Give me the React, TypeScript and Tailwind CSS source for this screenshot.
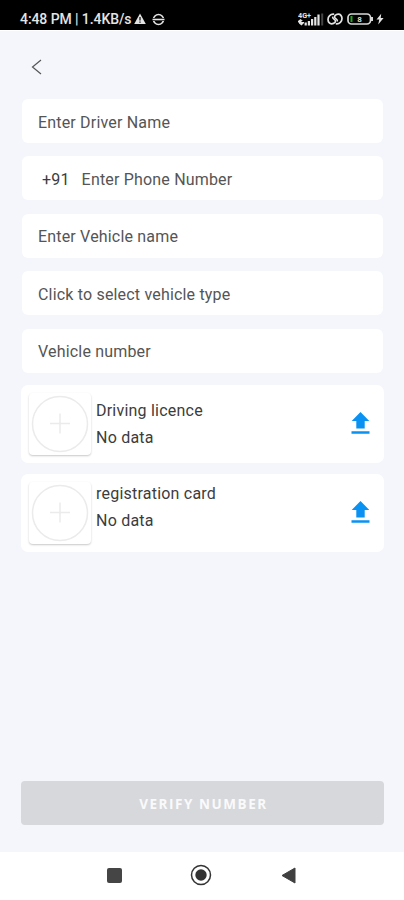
type UploadRowProps = {
  title: string;
  className: string;
};

const fields = [
  { label: "Enter Driver Name", prefix: "" },
  { label: "Enter Phone Number", prefix: "+91" },
  { label: "Enter Vehicle name", prefix: "" },
  { label: "Click to select vehicle type", prefix: "" },
  { label: "Vehicle number", prefix: "" },
];

function StatusBar() {
  return (
    <header className="flex h-[30px] shrink-0 items-center bg-black pl-5 pr-5 pt-[8px] text-[#e4e4e4]">
      <span className="whitespace-nowrap text-[14px] font-medium leading-5 tracking-[-0.08px]">
        4:48 PM | 1.4KB/s
      </span>
      <svg className="ml-[3px] h-3 w-3" viewBox="0 0 12 12">
        <path d="M6 .5 11.8 11H.2Z" fill="currentColor" />
        <path d="M6 4v3.5M6 8.5v1.3" stroke="#000" strokeWidth="1.2" />
      </svg>
      <svg className="ml-[6px] h-[13px] w-[13px]" viewBox="0 0 13 13" fill="none" stroke="currentColor">
        <circle cx="6.5" cy="6.5" r="5" strokeWidth="1.6" />
        <path d="M0 6.5h13" stroke="#000" strokeWidth="3" />
        <path d="M.5 6.5h12" strokeWidth="1.6" />
      </svg>

      <div className="ml-auto flex items-center">
        <svg className="h-[14px] w-[26px]" viewBox="0 0 26 14" fill="currentColor">
          <text x="0" y="5.5" fontSize="7" fontWeight="700" textLength="13" lengthAdjust="spacingAndGlyphs">
            4G+
          </text>
          <path d="m0 9 2.5-2L5 9H3.5v1H6v1l-2.5 2.5L1 11.5v-1H0Z" />
          <path d="M6.6 10.5h2.2v3H6.6zM9.8 9h2.2v4.5H9.8zM13 7h2.2v6.5H13zM16.2 5h2.2v8.5h-2.2zM19.4 2.5h2.2v11h-2.2z" />
          <path d="M23.2 1.5h2v12h-2z" fill="#444" />
        </svg>
        <svg className="ml-[3px] h-3 w-4" viewBox="0 0 16 12" fill="none" stroke="currentColor" strokeWidth="1.7" strokeLinecap="round">
          <path d="M6.5 1.2C3.5 1 1 3.400 1 6.400c0 2.600 1.700 4.500 3.800 4.400 2.500-.1 4.200-1.700 3.500-3.300-.6-1.400-2.600-1.700-2.600-3.200" />
          <path d="M9.500 10.800c3 .2 5.500-2.200 5.500-5.200 0-2.600-1.700-4.500-3.800-4.400-2.500.1-4.200 1.700-3.500 3.300.6 1.400 2.600 1.700 2.600 3.200" />
        </svg>
        <svg className="ml-1 h-3 w-[27px]" viewBox="0 0 27 12" fill="none">
          <rect x="1" y="1" width="22.5" height="10" rx="3.5" stroke="#d8d8d8" strokeWidth="1.7" />
          <path d="M25 4v4" stroke="#d8d8d8" strokeWidth="2" />
          <path d="M3.5 3h2v6h-2z" fill="#24a51f" />
          <text x="10.2" y="8.9" fontSize="8" fontWeight="700" fill="#ddd">8</text>
        </svg>
        <svg className="ml-[2px] h-3 w-2" viewBox="0 0 8 12" fill="currentColor">
          <path d="M5.2.7.5 6.5h2.8L2.2 11.5 7.6 5H4.7Z" />
        </svg>
      </div>
    </header>
  );
}

function UploadRow({ title, className }: UploadRowProps) {
  return (
    <div className="flex h-[78px] rounded-[7px] bg-white pl-2 pr-[14px]">
      <div className="mt-[8px] flex h-[62px] w-[62px] shrink-0 items-center justify-center rounded-[4px] bg-white shadow-[0_1px_2px_rgba(0,0,0,0.22)]">
        <svg className="h-[58px] w-[58px]" viewBox="0 0 58 58" fill="none" stroke="#ebebeb">
          <circle cx="29" cy="29" r="27.5" strokeWidth="1.5" />
          <path d="M29 18.5v20M19 28.5h20" strokeWidth="1.5" />
        </svg>
      </div>
      <div className={`ml-[5px] flex flex-col text-base tracking-[0.22px] text-[#3c3c3c] ${className}`}>
        <span className="leading-[27px]">{title}</span>
        <span className="leading-[27px]">No data</span>
      </div>
      <svg className="ml-auto mt-[27px] h-[23px] w-[19px]" viewBox="0 0 19 23" fill="#0992f2">
        <path d="M9.5 0 18.3 9h-4.600v7.500H5.300V9H.7ZM.5 19.300h18v2.500H.5z" />
      </svg>
    </div>
  );
}

export default function App() {
  return (
    <div className="flex h-[900px] w-[404px] flex-col overflow-hidden bg-[#f4f6fb] font-['Roboto',sans-serif]">
      <StatusBar />

      <main className="flex flex-1 flex-col border-t border-white pl-[21px] pr-5">
        <button className="ml-[10px] mt-7 h-4 w-[11px]" aria-label="Back">
          <svg className="h-4 w-[11px]" viewBox="0 0 11 16" fill="none" stroke="#555" strokeWidth="1.2">
            <path d="M10 1 1.5 8l8.5 7" />
          </svg>
        </button>

        <div className="mt-[24px] flex flex-col gap-[13.4px] px-px">
          {fields.map((field) => (
            <div
              key={field.label}
              className="flex h-11 items-center rounded-[6px] bg-white px-4 pt-[3px] text-base tracking-[0.18px] text-[#555]"
            >
              {field.prefix && (
                <span className="ml-1 mr-3 text-[#3c3c3c]">{field.prefix}</span>
              )}
              <span>{field.label}</span>
            </div>
          ))}
        </div>

        <div className="mt-[12.4px] flex flex-col gap-[11px]">
          <UploadRow title="Driving licence" className="mt-[12px]" />
          <UploadRow title="registration card" className="mt-[6.5px]" />
        </div>

        <button className="mb-[27px] mt-auto h-11 rounded-[4px] bg-[#d7d8dc] pl-[2px] pt-[2px] font-['Open_Sans',sans-serif] text-[13.5px] font-bold tracking-[1.55px] text-[#fafafa]">
          VERIFY NUMBER
        </button>
      </main>

      <nav className="flex h-12 shrink-0 items-center bg-white pb-[2px] pl-[107px]">
        <svg className="h-[15px] w-[15px]" viewBox="0 0 15 15">
          <rect width="15" height="15" rx="2" fill="#454545" />
        </svg>
        <svg className="ml-[68px] h-[22px] w-[22px]" viewBox="0 0 22 22">
          <circle cx="11" cy="11" r="9.5" fill="none" stroke="#333" strokeWidth="1.5" />
          <circle cx="11" cy="11" r="5.7" fill="#333" />
        </svg>
        <svg className="ml-[69px] h-[17px] w-[15px]" viewBox="0 0 15 17">
          <path d="M14 1v15L1 8.5Z" fill="#404040" stroke="#404040" strokeLinejoin="round" />
        </svg>
      </nav>
    </div>
  );
}
